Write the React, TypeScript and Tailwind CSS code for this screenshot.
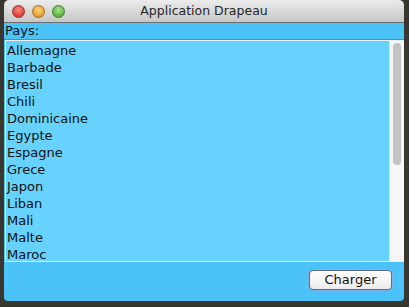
import React from "react";

const countries = ["Allemagne","Barbade","Bresil","Chili","Dominicaine","Egypte","Espagne","Grece","Japon","Liban","Mali","Malte","Maroc"];

function Light({ from, to, border }: { from: string; to: string; border: string }) {
  return (
    <div
      className="w-[13px] h-[13px] rounded-full"
      style={{ background: `radial-gradient(circle at 50% 35%, ${from}, ${to})`, border: `1px solid ${border}` }}
    />
  );
}

export default function App() {
  return (
    <div className="w-[409px] h-[307px] bg-[#3a3630] overflow-hidden" style={{ fontFamily: '"DejaVu Sans", sans-serif' }}>
      <div className="ml-[4px] w-[400px] h-[301px] flex flex-col rounded-b-[4px] overflow-hidden">
        <div className="h-[23px] flex items-center relative bg-gradient-to-b from-[#ececec] to-[#c6c6c6] border-b border-[#6e6e6e] rounded-t-[5px]">
          <div className="flex gap-[7px] pl-[8px]">
            <Light from="#ff8a80" to="#c9201b" border="#9b2a25" />
            <Light from="#ffd27a" to="#d88a12" border="#a86c1a" />
            <Light from="#a8e58a" to="#3f9c25" border="#3f7e2a" />
          </div>
          <div className="absolute inset-0 flex items-center justify-center text-[12.5px] text-[#262626]">Application Drapeau</div>
        </div>
        <div className="h-[16px] bg-[#4bc2f8] text-[13px] leading-[16px] pl-[1px] text-[#111]">Pays:</div>
        <div className="h-[1px] bg-[#808080]" />
        <div className="flex h-[222px] bg-[#4bc2f8] pl-[1px]">
          <div className="flex-1 bg-[#66d2fd] border-l border-t border-b border-[#f0f0f0] pt-[1px] overflow-hidden">
            {countries.map((c) => (
              <div key={c} className="h-[17px] leading-[18px] text-[13px] pl-[1px] text-[#111]">{c}</div>
            ))}
          </div>
          <div className="w-[15px] bg-[#f6f6f6] border-l border-[#e2e2e2] border-t border-b border-t-[#f0f0f0] border-b-[#f0f0f0] flex justify-center pt-[2px]">
            <div className="w-[8px] h-[122px] rounded-full bg-[#c3c3c3]" />
          </div>
        </div>
        <div className="flex-1 bg-[#4bc2f8] flex justify-end items-start pt-[8px] pr-[12px]">
          <div className="w-[83px] h-[20px] rounded-[4px] border border-[#5a6e8a] bg-gradient-to-b from-[#ffffff] to-[#ececec] flex items-center justify-center text-[13px] text-[#111] shadow-[0_0_0_1px_#7fb0e8]">
            Charger
          </div>
        </div>
      </div>
    </div>
  );
}
